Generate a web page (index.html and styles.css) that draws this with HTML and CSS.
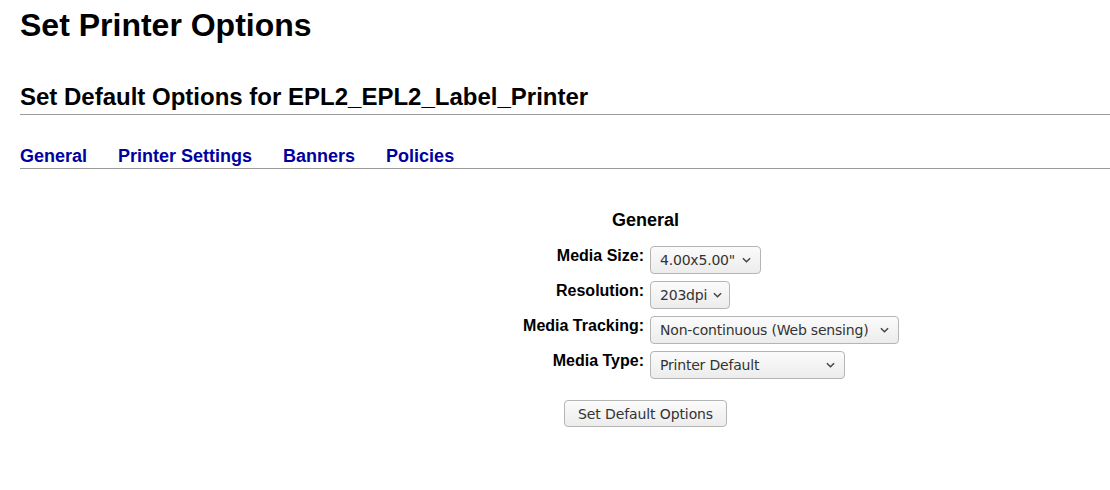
FILE: index.html
```html
<!DOCTYPE html>
<html>
<head>
<meta charset="utf-8">
<link rel="stylesheet" href="styles.css">
</head>
<body>
<h1 class="title">Set Printer Options</h1>
<h2 class="subtitle">Set Default Options for EPL2_EPL2_Label_Printer</h2>
<nav class="tabs">
  <a class="tab" href="#">General</a>
  <a class="tab" href="#">Printer Settings</a>
  <a class="tab" href="#">Banners</a>
  <a class="tab" href="#">Policies</a>
</nav>
<section class="form">
  <h3 class="form-title">General</h3>
  <div class="rows">
    <div class="label">Media Size:</div>
    <div class="select w-size"><span>4.00x5.00"</span><svg class="chev" viewBox="0 0 10 6"><path d="M1 1l4 4 4-4" fill="none" stroke="#444" stroke-width="1.6"/></svg></div>
    <div class="label">Resolution:</div>
    <div class="select w-res"><span>203dpi</span><svg class="chev" viewBox="0 0 10 6"><path d="M1 1l4 4 4-4" fill="none" stroke="#444" stroke-width="1.6"/></svg></div>
    <div class="label">Media Tracking:</div>
    <div class="select w-track"><span>Non-continuous (Web sensing)</span><svg class="chev" viewBox="0 0 10 6"><path d="M1 1l4 4 4-4" fill="none" stroke="#444" stroke-width="1.6"/></svg></div>
    <div class="label">Media Type:</div>
    <div class="select w-type"><span>Printer Default</span><svg class="chev" viewBox="0 0 10 6"><path d="M1 1l4 4 4-4" fill="none" stroke="#444" stroke-width="1.6"/></svg></div>
  </div>
  <div class="actions"><button class="btn">Set Default Options</button></div>
</section>
</body>
</html>
```
FILE: styles.css
```css
html, body { margin: 0; padding: 0; background: #fff; }
body {
  font-family: "Liberation Sans", Arial, sans-serif;
  color: #000;
  padding: 0 0 0 20px;
}
.title {
  font-size: 32px;
  font-weight: bold;
  margin: 0;
  padding-top: 6px;
  line-height: 38px;
}
.subtitle {
  font-size: 24px;
  font-weight: bold;
  margin: 40px 0 0 0;
  line-height: 26px;
  padding-bottom: 4px;
  border-bottom: 1px solid #9a9a9a;
}
.tabs {
  display: flex;
  gap: 31px;
  margin-top: 31px;
  padding-bottom: 2px;
  border-bottom: 1px solid #9a9a9a;
}
.tab {
  font-size: 18px;
  font-weight: bold;
  color: #0000a0;
  text-decoration: none;
  line-height: 20px;
}
.form {
  display: grid;
  grid-template-columns: 624px auto;
  margin-top: 40px;
}
.form-title {
  grid-column: 1 / span 2;
  margin: 0;
  font-size: 18px;
  line-height: 22px;
  font-weight: bold;
  padding-left: 592px;
}
.rows {
  grid-column: 1 / span 2;
  display: grid;
  grid-template-columns: 624px auto;
  column-gap: 6px;
  row-gap: 7px;
  margin-top: 15px;
  align-items: start;
}
.label {
  text-align: right;
  font-weight: bold;
  font-size: 16px;
  line-height: 20px;
}
.select {
  box-sizing: border-box;
  height: 28px;
  border: 1px solid #b5b5b5;
  border-radius: 4px;
  background: linear-gradient(#fbfbfb, #ececec);
  display: flex;
  align-items: center;
  justify-content: space-between;
  padding: 0 9px 0 9px;
  font-family: "DejaVu Sans", "Noto Sans", sans-serif;
  font-size: 14px;
  color: #333;
  justify-self: start;
  letter-spacing: -0.2px;
}
.chev { width: 9px; height: 6px; margin-left: 6px; flex: none; }
.w-size { width: 111px; }
.w-res { width: 80px; }
.w-track { width: 249px; }
.w-type { width: 195px; }
.actions {
  grid-column: 1 / span 2;
  padding-left: 544px;
  margin-top: 21px;
}
.btn {
  box-sizing: border-box;
  width: 163px;
  height: 27px;
  border: 1px solid #b5b5b5;
  border-radius: 4px;
  background: linear-gradient(#fbfbfb, #ececec);
  font-family: "DejaVu Sans", "Noto Sans", sans-serif;
  font-size: 14px;
  color: #333;
  letter-spacing: -0.1px;
  padding: 0;
}
```
